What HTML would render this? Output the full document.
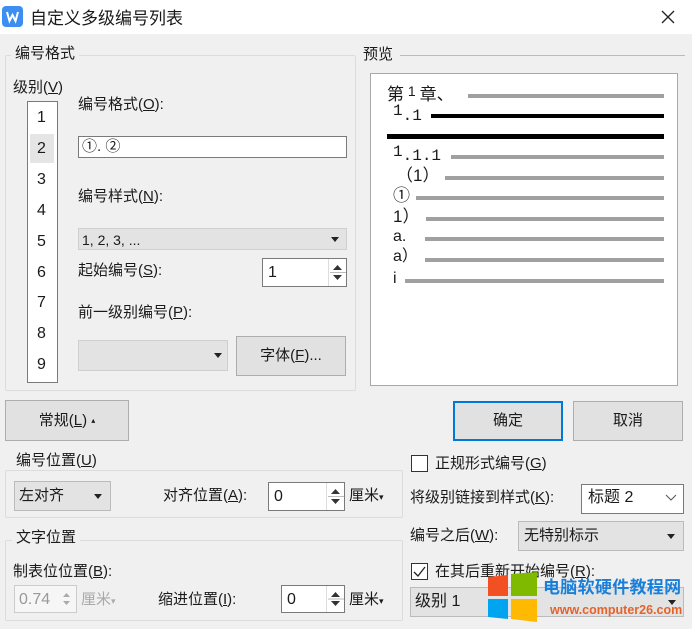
<!DOCTYPE html>
<html><head><meta charset="utf-8">
<style>
*{margin:0;padding:0;box-sizing:border-box}
body{width:692px;height:629px;background:#f0f0f0;position:relative;overflow:hidden;font-family:"Liberation Sans","Noto Sans CJK SC",sans-serif;font-size:15px;color:#1a1a1a}
.a{position:absolute;white-space:nowrap;line-height:1}
.grp{position:absolute;border:1px solid #dcdcdc;border-radius:2px}
.lbl{position:absolute;background:#f0f0f0;padding:0 4px;line-height:1;font-size:15px}
.box{position:absolute;background:#fff;border:1px solid #7a7a7a}
.sel{position:absolute;background:#e3e3e3;border:1px solid #cfcfcf}
.btn{position:absolute;background:#e1e1e1;border:1px solid #adadad;text-align:center;font-size:15px}
.tri{position:absolute;width:0;height:0;border-left:4px solid transparent;border-right:4px solid transparent;border-top:5px solid #222}
.bar{position:absolute;background:#a0a0a0;height:4px}
.blk{position:absolute;background:#000}
u{text-decoration:underline}
.spin{position:absolute;right:0;top:0;width:18px;height:100%;border-left:1px solid #ddd}
.pv{font-family:"Liberation Mono","Noto Sans CJK SC",monospace}
</style></head><body>
<div style="position:absolute;left:0;top:0;width:692px;height:34px;background:#fff"></div>
<svg style="position:absolute;left:2px;top:6px" width="21" height="21"><rect width="21" height="21" rx="4" fill="#3d8ef0"/><path d="M5 6 L7.5 15 L10.5 9 L13.5 15 L16 6" stroke="#fff" stroke-width="2" fill="none"/></svg>
<div class="a" style="left:30px;top:10px;font-size:17px">自定义多级编号列表</div>
<svg style="position:absolute;left:660px;top:9px" width="16" height="16"><path d="M2 2L14 14M14 2L2 14" stroke="#222" stroke-width="1.3"/></svg>

<div class="grp" style="left:5px;top:55px;width:351px;height:336px"></div>
<div class="lbl" style="left:11px;top:46px">编号格式</div>
<div class="a" style="left:13px;top:80px">级别(<u>V</u>)</div>
<div class="box" style="left:27px;top:101px;width:31px;height:282px"></div>
<div style="position:absolute;left:30px;top:134px;width:24px;height:29px;background:#e5e5e5"></div>
<div class="a" style="left:37px;top:110px;font-size:16px">1</div>
<div class="a" style="left:37px;top:141px;font-size:16px">2</div>
<div class="a" style="left:37px;top:172px;font-size:16px">3</div>
<div class="a" style="left:37px;top:203px;font-size:16px">4</div>
<div class="a" style="left:37px;top:234px;font-size:16px">5</div>
<div class="a" style="left:37px;top:265px;font-size:16px">6</div>
<div class="a" style="left:37px;top:295px;font-size:16px">7</div>
<div class="a" style="left:37px;top:326px;font-size:16px">8</div>
<div class="a" style="left:37px;top:357px;font-size:16px">9</div>

<div class="a" style="left:78px;top:97px">编号格式(<u>O</u>):</div>
<div class="box" style="left:78px;top:136px;width:269px;height:22px"></div>
<div class="a" style="left:82px;top:139px;font-size:15px">①. ②</div>
<div class="a" style="left:78px;top:189px">编号样式(<u>N</u>):</div>
<div class="sel" style="left:78px;top:228px;width:269px;height:22px"></div>
<div class="a" style="left:82px;top:233px;font-size:14px">1, 2, 3, ...</div>
<div class="tri" style="left:331px;top:237px"></div>
<div class="a" style="left:78px;top:263px">起始编号(<u>S</u>):</div>
<div class="box" style="left:262px;top:258px;width:85px;height:29px"><div class="a" style="left:5px;top:6px;font-size:16px">1</div>
<div class="spin"><svg width="17" height="27"><path d="M4 11L8.5 6L13 11Z M4 16L8.5 21L13 16Z" fill="#333"/><line x1="1" y1="13.5" x2="17" y2="13.5" stroke="#bbb"/></svg></div></div>
<div class="a" style="left:78px;top:305px">前一级别编号(<u>P</u>):</div>
<div class="sel" style="left:78px;top:340px;width:150px;height:31px"></div>
<div class="tri" style="left:214px;top:353px"></div>
<div class="btn" style="left:236px;top:336px;width:110px;height:40px;line-height:38px">字体(<u>F</u>)...</div>

<div style="position:absolute;left:400px;top:55px;width:285px;height:1px;background:#bbb"></div>
<div class="a" style="left:363px;top:47px">预览</div>
<div class="box" style="left:370px;top:73px;width:308px;height:313px;border-color:#a8a8a8"></div>
<div class="a" style="left:387px;top:84px;font-size:17px">第<span style="font-size:14px;vertical-align:4px"> 1 </span>章、</div>
<div class="bar" style="left:468px;top:94px;width:196px"></div>
<div class="a pv" style="left:393px;top:103px;font-size:16px">1<span style="position:relative;top:5px">.1</span></div>
<div class="blk" style="left:431px;top:114px;width:233px;height:4px"></div>
<div class="blk" style="left:387px;top:134px;width:277px;height:5px"></div>
<div class="a pv" style="left:393px;top:144px;font-size:16px">1<span style="position:relative;top:4px">.1.1</span></div>
<div class="bar" style="left:451px;top:155px;width:213px"></div>
<div class="a" style="left:396px;top:167px;font-size:17px">（1）</div>
<div class="bar" style="left:445px;top:176px;width:219px"></div>
<div class="a" style="left:393px;top:187px;font-size:17px">①</div>
<div class="bar" style="left:416px;top:196px;width:248px"></div>
<div class="a" style="left:393px;top:208px;font-size:17px">1）</div>
<div class="bar" style="left:426px;top:217px;width:238px"></div>
<div class="a" style="left:393px;top:229px;font-size:16px">a.</div>
<div class="bar" style="left:425px;top:237px;width:239px"></div>
<div class="a" style="left:393px;top:249px;font-size:16px">a）</div>
<div class="bar" style="left:425px;top:258px;width:239px"></div>
<div class="a" style="left:393px;top:271px;font-size:16px">i</div>
<div class="bar" style="left:405px;top:279px;width:259px"></div>

<div class="btn" style="left:5px;top:400px;width:124px;height:41px;line-height:39px">常规(<u>L</u>) <span style="font-size:8px;vertical-align:2px">▴<br></span></div>
<div class="btn" style="left:453px;top:401px;width:110px;height:40px;line-height:36px;border:2px solid #0078d7">确定</div>
<div class="btn" style="left:573px;top:401px;width:110px;height:40px;line-height:38px">取消</div>

<div class="grp" style="left:5px;top:470px;width:398px;height:48px"></div>
<div class="lbl" style="left:12px;top:453px">编号位置(<u>U</u>)</div>
<div class="sel" style="left:14px;top:481px;width:97px;height:30px;border-color:#bbb"></div>
<div class="a" style="left:19px;top:488px">左对齐</div>
<div class="tri" style="left:94px;top:494px"></div>
<div class="a" style="left:163px;top:488px">对齐位置(<u>A</u>):</div>
<div class="box" style="left:268px;top:482px;width:77px;height:29px"><div class="a" style="left:5px;top:6px;font-size:16px">0</div>
<div class="spin"><svg width="17" height="27"><path d="M4 11L8.5 6L13 11Z M4 16L8.5 21L13 16Z" fill="#333"/><line x1="1" y1="13.5" x2="17" y2="13.5" stroke="#bbb"/></svg></div></div>
<div class="a" style="left:349px;top:488px">厘米<span style="font-size:9px">▾</span></div>

<div class="grp" style="left:5px;top:540px;width:398px;height:81px"></div>
<div class="lbl" style="left:12px;top:530px">文字位置</div>
<div class="a" style="left:13px;top:564px">制表位位置(<u>B</u>):</div>
<div class="box" style="left:14px;top:585px;width:63px;height:28px;border-color:#ccc;background:#f6f6f6"><div class="a" style="left:4px;top:6px;font-size:16px;color:#999">0.74</div>
<div class="spin" style="border:0"><svg width="17" height="26"><path d="M5 11L8.5 7L12 11Z M5 15L8.5 19L12 15Z" fill="#aaa"/></svg></div></div>
<div class="a" style="left:81px;top:592px;color:#aaa">厘米<span style="font-size:9px">▾</span></div>
<div class="a" style="left:158px;top:592px">缩进位置(<u>I</u>):</div>
<div class="box" style="left:281px;top:585px;width:64px;height:28px"><div class="a" style="left:5px;top:6px;font-size:16px">0</div>
<div class="spin"><svg width="17" height="26"><path d="M4 11L8.5 6L13 11Z M4 15L8.5 20L13 15Z" fill="#333"/><line x1="1" y1="13" x2="17" y2="13" stroke="#bbb"/></svg></div></div>
<div class="a" style="left:349px;top:592px">厘米<span style="font-size:9px">▾</span></div>

<div class="box" style="left:411px;top:455px;width:17px;height:17px;border-color:#333"></div>
<div class="a" style="left:435px;top:456px">正规形式编号(<u>G</u>)</div>
<div class="a" style="left:410px;top:490px">将级别链接到样式(<u>K</u>):</div>
<div class="box" style="left:581px;top:484px;width:103px;height:30px"></div>
<div class="a" style="left:588px;top:490px;font-size:16px">标题 2</div>
<svg style="position:absolute;left:665px;top:494px" width="12" height="8"><path d="M1 1L6 6L11 1" stroke="#555" fill="none"/></svg>
<div class="a" style="left:410px;top:528px">编号之后(<u>W</u>):</div>
<div class="sel" style="left:518px;top:521px;width:166px;height:30px;border-color:#bbb"></div>
<div class="a" style="left:524px;top:528px">无特别标示</div>
<div class="tri" style="left:667px;top:534px"></div>
<div class="box" style="left:411px;top:563px;width:17px;height:17px;border-color:#333"></div>
<svg style="position:absolute;left:412px;top:564px" width="15" height="15"><path d="M2 8L6 12L13 3" stroke="#222" stroke-width="1.3" fill="none"/></svg>
<div class="a" style="left:435px;top:564px">在其后重新开始编号(<u>R</u>):</div>
<div class="sel" style="left:410px;top:587px;width:274px;height:30px;border-color:#bbb"></div>
<div class="a" style="left:415px;top:594px;font-size:16px">级别 1</div>
<div class="tri" style="left:668px;top:600px"></div>

<svg style="position:absolute;left:487px;top:572px" width="52" height="52">
<path d="M1 5L21 3L21 24L1 24Z" fill="#f25022"/>
<path d="M24 2L50 0L50 24L24 24Z" fill="#7fba00"/>
<path d="M1 27L21 27L21 47L1 45Z" fill="#00a4ef"/>
<path d="M24 27L50 27L50 50L24 47Z" fill="#ffb900"/>
</svg>
<div class="a" style="left:543px;top:579px;font-size:17px;font-weight:bold;color:#1a7fd8;letter-spacing:0.3px">电脑软硬件教程网</div>
<div class="a" style="left:550px;top:604px;font-size:12.5px;font-weight:bold;color:#e5632a">www.computer26.com</div>
</body></html>
